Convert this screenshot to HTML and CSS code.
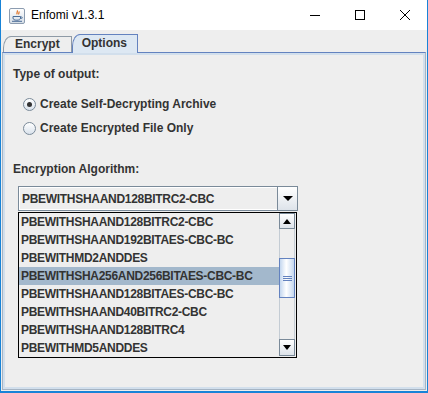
FILE: index.html
```html
<!DOCTYPE html>
<html lang="en">
<head>
    <meta charset="UTF-8">
    <meta name="viewport" content="width=device-width, initial-scale=1.0">
    <title>Enfomi v1.3.1</title>
    <link rel="stylesheet" href="styles.css">
</head>
<body>
<div class="window">
    <!-- title bar -->
    <div class="titlebar">
        <svg class="app-icon" width="16" height="16" viewBox="0 0 16 16">
            <defs>
                <linearGradient id="ig" x1="0" y1="0" x2="0" y2="1">
                    <stop offset="0" stop-color="#ffffff"/>
                    <stop offset="1" stop-color="#d5dde6"/>
                </linearGradient>
            </defs>
            <rect x="0.5" y="0.5" width="15" height="15" rx="1.5" fill="url(#ig)" stroke="#8c9cb0"/>
            <path d="M8 2.5c1.5 1.2-1.2 2.4 0.3 3.8M9.8 3.5c1 1-0.8 1.8 0.2 2.8" fill="none" stroke="#e07020" stroke-width="1.2"/>
            <path d="M4 8.5h7.5v1.5c0 1.5-1.5 2.2-3.7 2.2S4 11.5 4 10z" fill="none" stroke="#4a6c96" stroke-width="1"/>
            <path d="M11.5 9h1.2c0.8 0 0.8 1.4 0 1.4h-1.2" fill="none" stroke="#4a6c96" stroke-width="0.9"/>
            <path d="M3 13.3h10" stroke="#4a6c96" stroke-width="1"/>
        </svg>
        <span class="title">Enfomi v1.3.1</span>
        <div class="controls">
            <div class="ctl"><svg width="12" height="12" viewBox="0 0 12 12"><path d="M1 6.5h10" stroke="#000" stroke-width="1"/></svg></div>
            <div class="ctl"><svg width="12" height="12" viewBox="0 0 12 12"><rect x="1.5" y="1.5" width="9" height="9" fill="none" stroke="#000"/></svg></div>
            <div class="ctl"><svg width="12" height="12" viewBox="0 0 12 12"><path d="M1 1l10 10M11 1L1 11" stroke="#000" stroke-width="1"/></svg></div>
        </div>
    </div>

    <div class="client">
        <div class="tabs">
            <div class="tab">Encrypt</div>
            <div class="tab active">Options</div>
        </div>

        <div class="panel">
            <div class="label">Type of output:</div>

            <div class="radio-row">
                <span class="radio checked"></span>
                <span>Create Self-Decrypting Archive</span>
            </div>
            <div class="radio-row">
                <span class="radio"></span>
                <span>Create Encrypted File Only</span>
            </div>

            <div class="label label-gap">Encryption Algorithm:</div>

            <div class="combo">
                <div class="combo-text">PBEWITHSHAAND128BITRC2-CBC</div>
                <div class="combo-btn"><span class="arrow-down"></span></div>
            </div>

            <!-- open popup of the combo box -->
            <div class="popup">
                <ul class="list">
                    <li>PBEWITHSHAAND128BITRC2-CBC</li>
                    <li>PBEWITHSHAAND192BITAES-CBC-BC</li>
                    <li>PBEWITHMD2ANDDES</li>
                    <li class="selected">PBEWITHSHA256AND256BITAES-CBC-BC</li>
                    <li>PBEWITHSHAAND128BITAES-CBC-BC</li>
                    <li>PBEWITHSHAAND40BITRC2-CBC</li>
                    <li>PBEWITHSHAAND128BITRC4</li>
                    <li>PBEWITHMD5ANDDES</li>
                </ul>
                <div class="scrollbar">
                    <div class="sb-btn sb-up"><span class="arrow-up"></span></div>
                    <div class="sb-track">
                        <div class="sb-thumb">
                            <span class="grip"></span>
                            <span class="grip"></span>
                            <span class="grip"></span>
                        </div>
                    </div>
                    <div class="sb-btn sb-down"><span class="arrow-down small"></span></div>
                </div>
            </div>
        </div>
    </div>
</div>
</body>
</html>
```

FILE: styles.css
```css
/* page reset */
html, body {
  margin: 0;
  padding: 0;
  background: #ffffff;
}

/* outer window frame */
.window {
  width: 428px;
  height: 393px;
  box-sizing: border-box;
  border: 1px solid #1883d7;
  border-top: none;
  border-bottom-width: 2px;
  display: flex;
  flex-direction: column;
  font-family: "Liberation Sans", Arial, sans-serif;
}

/* title bar */
.titlebar {
  height: 30px;
  flex: none;
  display: flex;
  align-items: center;
  background: #ffffff;
}

.app-icon {
  margin-left: 8px;
  margin-top: 1px;
}

.title {
  margin-left: 6px;
  font-size: 12px;
  color: #000000;
}

.controls {
  margin-left: auto;
  display: flex;
  height: 100%;
}

.ctl {
  width: 45px;
  height: 30px;
  display: flex;
  align-items: center;
  justify-content: center;
}

/* client area */
.client {
  flex: 1;
  display: flex;
  flex-direction: column;
  background: #eeeeee;
  color: #333333;
  font-size: 12px;
  font-weight: bold;
}

/* tabs */
.tabs {
  height: 22px;
  flex: none;
  display: flex;
  align-items: flex-end;
  padding-left: 2px;
}

.tab {
  height: 15px;
  line-height: 15px;
  padding: 0 11px 0 11px;
  border: 1px solid #8e9aa6;
  border-bottom: none;
  border-top-left-radius: 8px 12px;
  background: #eeeeee;
  position: relative;
}

.tab.active {
  height: 18px;
  line-height: 17px;
  padding: 0 10px 0 9px;
  border-color: #6382bf;
  border-left-color: #6382bf;
  background: #dde8f3;
  margin-bottom: -1px;
  z-index: 1;
}

/* tab content panel */
.panel {
  flex: 1;
  margin: 0 1px 1px 1px;
  border: 1px solid #a5b4c4;
  border-top-color: #6382bf;
  box-shadow: inset 0 0 0 2px #d2dfec;
  padding: 14px 10px 0 10px;
  display: flex;
  flex-direction: column;
  align-items: flex-start;
}

.label {
  height: 15px;
  line-height: 15px;
}

.label-gap {
  margin-top: 22px;
}

/* radio buttons */
.radio-row {
  height: 24px;
  display: flex;
  align-items: center;
  gap: 4px;
  padding-left: 10px;
}

.radio-row:first-of-type {
  margin-top: 10px;
}

.label + .radio-row {
  margin-top: 10px;
}

.radio {
  width: 11px;
  height: 11px;
  border: 1px solid #7a8a99;
  border-radius: 50%;
  background: linear-gradient(#ffffff, #d9e2ec);
  display: flex;
  align-items: center;
  justify-content: center;
}

.radio.checked::after {
  content: "";
  width: 5px;
  height: 5px;
  border-radius: 50%;
  background: #333333;
}

/* combo box */
.combo {
  margin-top: 9px;
  margin-left: 5px;
  width: 280px;
  height: 25px;
  box-sizing: border-box;
  border: 1px solid #7a8a99;
  display: flex;
}

.combo-text {
  flex: 1;
  padding-left: 2px;
  line-height: 23px;
  letter-spacing: -0.3px;
  border: 1px solid #ffffff;
  border-right: none;
}

.combo-btn {
  width: 19px;
  border-left: 1px solid #7a8a99;
  background: linear-gradient(#ffffff, #dde3ea);
  display: flex;
  align-items: center;
  justify-content: center;
}

.arrow-down {
  width: 0;
  height: 0;
  border-left: 5px solid transparent;
  border-right: 5px solid transparent;
  border-top: 5px solid #000000;
}

.arrow-down.small,
.arrow-up {
  border-left-width: 4px;
  border-right-width: 4px;
}

.arrow-up {
  width: 0;
  height: 0;
  border-left: 4px solid transparent;
  border-right: 4px solid transparent;
  border-bottom: 5px solid #000000;
}

.arrow-down.small {
  border-top-width: 5px;
}

/* combo popup list */
.popup {
  margin-top: 1px;
  margin-left: 5px;
  width: 279px;
  height: 146px;
  box-sizing: border-box;
  border: 1px solid #000000;
  display: flex;
}

.list {
  list-style: none;
  margin: 0;
  padding: 0;
  flex: 1;
}

.list li {
  height: 18px;
  line-height: 18px;
  padding-left: 2px;
  letter-spacing: -0.3px;
  white-space: nowrap;
}

.list li.selected {
  background: #a3b8cc;
}

/* scrollbar */
.scrollbar {
  width: 16px;
  margin-right: 1px;
  margin-bottom: 1px;
  display: flex;
  flex-direction: column;
}

.sb-btn {
  height: 14px;
  border: 1px solid #7a8a99;
  background: linear-gradient(#ffffff, #dde3ea);
  display: flex;
  align-items: center;
  justify-content: center;
}

.sb-down {
  height: 15px;
}

.sb-track {
  flex: 1;
  border-left: 1px solid #c4ccd4;
  border-right: 1px solid #c4ccd4;
  padding-top: 29px;
}

.sb-thumb {
  height: 38px;
  margin: 0 -1px;
  border: 1px solid #6382bf;
  background: linear-gradient(90deg, #c4d7ef, #ffffff 45%, #c4d7ef);
  display: flex;
  flex-direction: column;
  align-items: center;
  justify-content: center;
  gap: 1px;
}

.grip {
  width: 9px;
  height: 1px;
  background: #6382bf;
}
```
